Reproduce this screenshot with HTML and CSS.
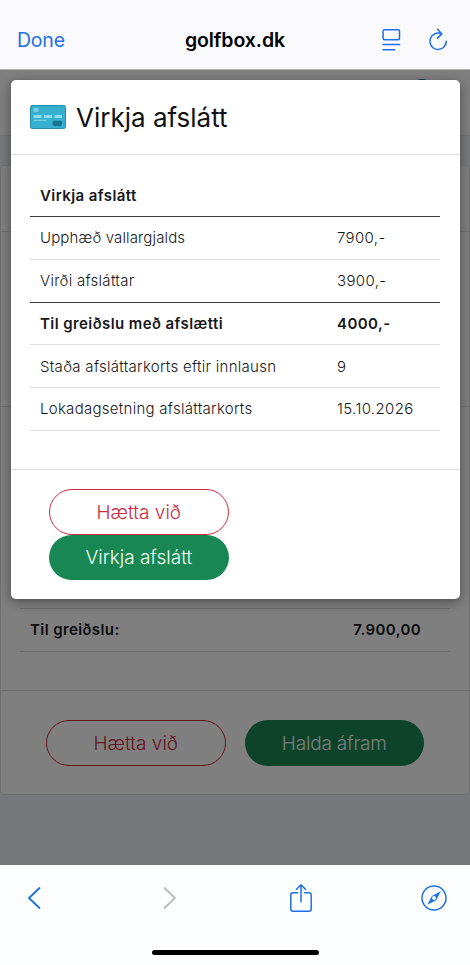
FILE: index.html
```html
<!DOCTYPE html>
<html lang="is">
<head>
<meta charset="utf-8">
<title>golfbox.dk</title>
<link rel="stylesheet" href="styles.css">
</head>
<body>
<div class="screen">
  <header class="topbar">
    <span class="done">Done</span>
    <span class="site">golfbox.dk</span>
    <span class="tools">
      <svg width="20" height="24" viewBox="0 0 20 24"><rect x="2.100" y="1.800" width="16.400" height="9.900" rx="1.500"/><path d="M2 16.500h16.700M2 21.700h11.800"/></svg>
      <svg width="20" height="24" viewBox="0 0 20 24"><path d="M18.300 13.300A8.200 8.200 0 1 1 13.700 5.900M9.600 1.300l4.300 4.600-4.500 4.200"/></svg>
    </span>
  </header>

  <main class="page">
    <nav class="sitebar"><i class="avatar"></i></nav>
    <section class="card">
      <div class="card-head"></div>
      <div class="card-intro"></div>
      <div class="card-body">
        <div class="total"><span>Til greiðslu:</span><span>7.900,00</span></div>
      </div>
      <div class="card-foot">
        <button class="btn cancel">Hætta við</button>
        <button class="btn confirm">Halda áfram</button>
      </div>
    </section>

    <div class="backdrop">
      <div class="modal">
        <div class="modal-head">
          <svg class="cc" width="36" height="24" viewBox="0 0 36 24">
            <rect x=".5" y=".5" width="35" height="23" rx="1.800" fill="#35b0ce" stroke="#2689a6" stroke-width="1"/>
            <rect x="3.500" y="3" width="5" height="4" rx=".8" fill="#75cfe2" stroke="none"/>
            <path class="digits" d="M3.500 11.500h8M14 11.500h8M24.500 11.500h7.500"/>
            <path class="holder" d="M3.500 15.300h13"/>
            <g fill="#16758f" stroke="none"><circle cx="25.300" cy="18.300" r="2.900"/><circle cx="29.300" cy="18.300" r="2.900"/></g>
          </svg>
          <h1>Virkja afslátt</h1>
        </div>
        <div class="modal-body">
          <table>
            <tr class="strong dark"><td>Virkja afslátt</td><td></td></tr>
            <tr><td>Upphæð vallargjalds</td><td>7900,-</td></tr>
            <tr class="dark"><td>Virði afsláttar</td><td>3900,-</td></tr>
            <tr class="strong"><td>Til greiðslu með afslætti</td><td>4000,-</td></tr>
            <tr><td>Staða afsláttarkorts eftir innlausn</td><td>9</td></tr>
            <tr><td>Lokadagsetning afsláttarkorts</td><td>15.10.2026</td></tr>
          </table>
        </div>
        <div class="modal-foot">
          <button class="btn cancel">Hætta við</button>
          <button class="btn confirm">Virkja afslátt</button>
        </div>
      </div>
    </div>
  </main>

  <footer class="bottombar">
    <div class="actions">
      <svg width="14" height="24" viewBox="0 0 14 24"><path d="M12.500 2L2 12l10.500 10" stroke-width="1.800"/></svg>
      <svg class="off" width="14" height="24" viewBox="0 0 14 24"><path d="M1.500 2L12 12 1.500 22" stroke-width="1.800"/></svg>
      <svg class="share" width="24" height="30" viewBox="0 0 24 30"><path d="M8.500 9.800H4Q1.800 9.800 1.800 12v14Q1.800 28.200 4 28.200h16Q22.200 28.200 22.200 26V12Q22.200 9.800 20 9.800h-4.500M12 18.800V2M7.500 6.300L12 1.800l4.500 4.500"/></svg>
      <svg class="compass" width="26" height="26" viewBox="0 0 26 26"><circle cx="13" cy="13" r="12"/><path d="M19.800 6.300L15.200 15.200 6.300 19.800l4.600-8.900z" fill="#1f70e6" stroke="none"/><circle cx="13" cy="13" r="1.900" fill="#fff" stroke="none"/></svg>
    </div>
    <div class="home"></div>
  </footer>
</div>
</body>
</html>
```

FILE: styles.css
```css
* { box-sizing: border-box; }
body { margin: 0; font-family: Inter, "Liberation Sans", sans-serif; color: #16181b; }
.screen { width: 470px; height: 965px; display: flex; flex-direction: column; overflow: hidden; }
svg { fill: none; stroke: #1f70e6; stroke-width: 1.5; stroke-linecap: round; stroke-linejoin: round; display: block; }
.cc { stroke-linecap: butt; }
.digits { stroke: #8edbea; stroke-width: 2.8; }
.holder { stroke: #75cfe2; stroke-width: 1.3; }

.topbar { height: 70px; flex: none; display: grid; grid-template-columns: 168px 1fr auto; align-items: center; padding: 11px 22px 0 17px; background: #fafafc; border-bottom: 1px solid #b0b0b2; }
.done { font-size: 19.5px; color: #1f70e6; letter-spacing: -.2px; }
.site { font-size: 19.5px; font-weight: 600; color: #000; letter-spacing: -.1px; }
.tools { display: flex; gap: 27px; justify-content: flex-end; }

.page { position: relative; height: 795px; flex: none; overflow: hidden; background: #eff1f4; }
.sitebar { height: 66px; background: #fff; border-bottom: 1px solid #e6e6e8; display: flex; justify-content: flex-end; padding: 9px 36px 0 0; }
.avatar { width: 24px; height: 24px; border-radius: 50%; background: #16666e; }
.card { margin-top: 29px; height: 630px; background: #fff; border: 1px solid #dcdcdf; border-radius: 5px; display: flex; flex-direction: column; }
.card-head { height: 66px; border-bottom: 1px solid #dcdcdf; }
.card-intro { height: 175px; border-bottom: 1px solid #dcdcdf; }
.card-body { flex: 1; display: flex; flex-direction: column; justify-content: flex-end; padding: 0 19px 38px; }
.total { height: 44px; display: flex; justify-content: space-between; align-items: center; padding: 0 29px 1px 10px; border-top: 1px solid #d4d6d9; border-bottom: 1px solid #d4d6d9; font-size: 15px; font-weight: 600; letter-spacing: .4px; }
.card-foot { height: 104px; border-top: 1px solid #d4d6d9; display: flex; gap: 19px; padding: 29px 0 0 45px; }

.backdrop { position: absolute; inset: 0; background: rgba(0, 0, 0, .5); padding: 10px 10px 0 11px; }
.modal { height: 519px; background: #fff; border-radius: 5px; box-shadow: 0 3px 12px rgba(0, 0, 0, .4); display: flex; flex-direction: column; }
.modal-head { height: 75px; border-bottom: 1px solid #e2e2e4; display: flex; align-items: center; gap: 10px; padding: 0 19px; }
h1 { margin: 0; padding-top: 2px; font-size: 26px; font-weight: 400; line-height: 32px; color: #111; }
.modal-body { height: 315px; border-bottom: 1px solid #dedee0; padding: 19px 19px 0; }
table { width: 410px; border-collapse: separate; border-spacing: 0; table-layout: fixed; }
tr { height: 43px; }
tr:nth-child(1), tr:nth-child(4), tr:nth-child(6) { height: 42.5px; }
td { padding: 0 10px; font-size: 15px; font-weight: 300; letter-spacing: .35px; border-bottom: 1px solid #dcdee1; white-space: nowrap; }
td:first-child { letter-spacing: .28px; width: 297px; }
tr:nth-child(2) td:first-child { letter-spacing: .14px; }
.strong td, .strong td:first-child { font-weight: 600; letter-spacing: .42px; padding-top: 1px; }
.dark td { border-bottom: 1.5px solid #3a3a3d; }
.modal-foot { flex: 1; display: flex; flex-direction: column; padding: 19px 0 0 38px; }

.btn { width: 179.5px; height: 45.5px; flex: none; border-radius: 23px; font: 300 19px Inter, sans-serif; letter-spacing: 0; padding: 1px 0 0; }
.cancel { background: none; border: 1.5px solid #cc293f; color: #cc293f; }
.confirm { background: #198754; border: 0; color: #f0fff6; }
.card-foot .confirm { letter-spacing: -.2px; color: #f2fbf5; }

.bottombar { height: 100px; flex: none; background: #fcfeff; display: flex; flex-direction: column; align-items: center; padding-top: 18px; }
.actions { width: 100%; display: flex; align-items: center; padding-left: 27px; height: 30px; }
.off { stroke: #b9bbc0; margin-left: 122px; }
.share { margin-left: 112px; }
.compass { margin-left: 108px; }
.home { width: 167px; height: 5px; margin-top: 37px; border-radius: 3px; background: #000; }
```
